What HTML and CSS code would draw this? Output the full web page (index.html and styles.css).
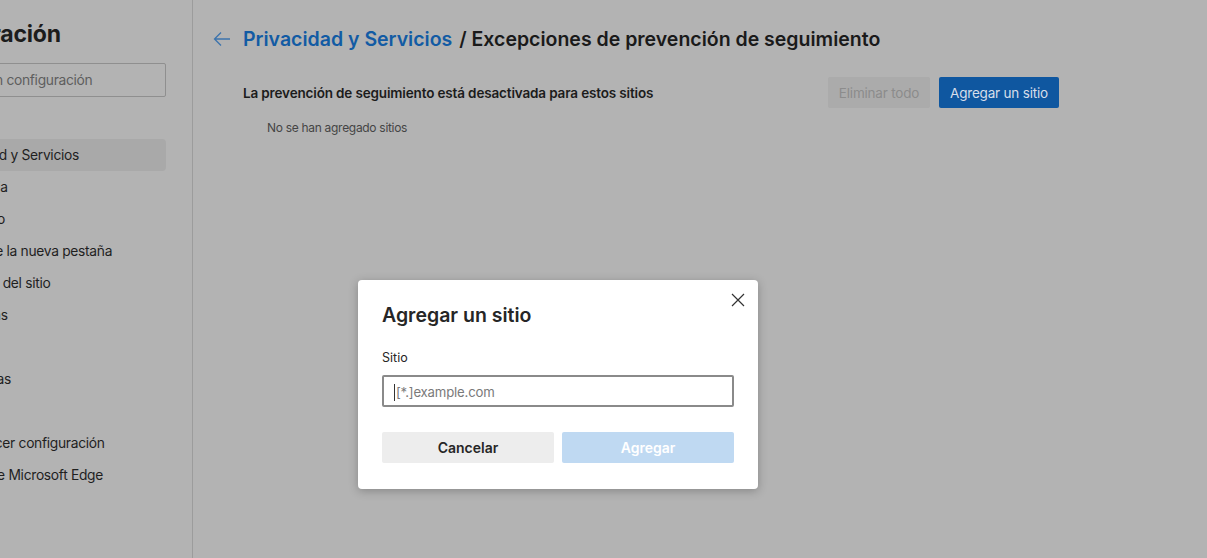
FILE: index.html
```html
<!DOCTYPE html>
<html lang="es">
<head>
<meta charset="utf-8">
<title>Configuración</title>
<link rel="stylesheet" href="styles.css">
</head>
<body>
<div class="app">
  <aside class="sidebar">
    <div class="side-inner">
      <h1 class="side-title">Configuración</h1>
      <div class="search">Buscar en configuración</div>
      <nav class="nav">
        <div class="nav-item">Perfiles</div>
        <div class="nav-item active">Privacidad y Servicios</div>
        <div class="nav-item">Apariencia</div>
        <div class="nav-item">Al iniciarlo</div>
        <div class="nav-item">Página de la nueva pestaña</div>
        <div class="nav-item">Permisos del sitio</div>
        <div class="nav-item">Descargas</div>
        <div class="nav-item">Idiomas</div>
        <div class="nav-item">Impresoras</div>
        <div class="nav-item">Sistema</div>
        <div class="nav-item">Restablecer configuración</div>
        <div class="nav-item">Acerca de Microsoft Edge</div>
      </nav>
    </div>
  </aside>
  <main class="main">
    <div class="heading">
      <svg class="back" width="18" height="16" viewBox="0 0 18 16"><path d="M17 8H2M8 1.5L1.5 8L8 14.5" fill="none" stroke="#3c74ad" stroke-width="1.3"/></svg>
      <span class="crumb">Privacidad y Servicios</span>
      <span class="crumb-rest">/ Excepciones de prevención de seguimiento</span>
    </div>
    <div class="section">
      <div class="section-row">
        <div class="section-title">La prevención de seguimiento está desactivada para estos sitios</div>
        <div class="actions">
          <button class="btn btn-disabled">Eliminar todo</button>
          <button class="btn btn-primary">Agregar un sitio</button>
        </div>
      </div>
      <div class="empty">No se han agregado sitios</div>
    </div>
  </main>
</div>
<div class="dialog">
  <svg class="close" width="14" height="14" viewBox="0 0 14 14"><path d="M1 1L13 13M13 1L1 13" stroke="#333" stroke-width="1.2" fill="none"/></svg>
  <h2 class="dialog-title">Agregar un sitio</h2>
  <label class="field-label">Sitio</label>
  <div class="input"><span class="caret"></span><span class="placeholder">[*.]example.com</span></div>
  <div class="dialog-actions">
    <button class="dbtn dbtn-cancel">Cancelar</button>
    <button class="dbtn dbtn-add">Agregar</button>
  </div>
</div>
</body>
</html>
```
FILE: styles.css
```css
* { box-sizing: border-box; }
html, body { margin: 0; padding: 0; }
body {
  background: #b3b3b3;
  font-family: Inter, "Noto Sans", "DejaVu Sans", sans-serif;
  color: #1c1c1c;
  width: 1207px;
  height: 558px;
  overflow: hidden;
  position: relative;
}
.app { display: flex; height: 558px; }
.sidebar {
  width: 193px;
  flex: none;
  border-right: 1px solid #9c9c9c;
  overflow: hidden;
}
.side-inner {
  width: 266px;
  margin-left: -100px;
  padding-top: 19px;
}
.side-title {
  margin: 0;
  padding-left: 3px;
  font-size: 23px;
  font-weight: 700;
  line-height: 30px;
  color: #1c1c1c;
  letter-spacing: -0.2px;
}
.search {
  margin-top: 14px;
  height: 34px;
  border: 1px solid #8f8f8f;
  border-radius: 2px;
  padding-left: 39px;
  display: flex;
  align-items: center;
  font-size: 13.8px;
  letter-spacing: -0.3px;
  color: #5e5e5e;
  white-space: nowrap;
}
.nav { margin-top: 10px; display: flex; flex-direction: column; }
.nav-item {
  height: 32px;
  display: flex;
  align-items: center;
  padding-left: 41px;
  font-size: 13.8px;
  letter-spacing: -0.3px;
  color: #1f1f1f;
  border-radius: 4px;
  white-space: nowrap;
}
.nav-item.active { background: #a9a9a9; }

.main { flex: 1; padding: 26px 0 0 20px; }
.heading { display: flex; align-items: center; height: 26px; }
.back { margin-right: 12px; }
.crumb { font-size: 19.5px; font-weight: 600; color: #125ba4; margin-right: 7px; }
.crumb-rest { font-size: 19.5px; font-weight: 600; color: #1a1a1a; }
.section { padding-left: 30px; margin-top: 25px; width: 846px; }
.section-row { display: flex; justify-content: space-between; align-items: center; height: 31px; }
.section-title { font-size: 13.5px; font-weight: 600; color: #1c1c1c; letter-spacing: -0.15px; }
.actions { display: flex; gap: 9px; }
.btn {
  height: 31px;
  border: none;
  border-radius: 2px;
  font-family: inherit;
  font-size: 13.5px;
  letter-spacing: -0.2px;
  padding: 0;
  white-space: nowrap;
}
.btn-disabled { background: #ababab; color: #8c8c8c; width: 102px; }
.btn-primary { background: #0f57a0; color: #d6deea; width: 120px; }
.empty { font-size: 12px; letter-spacing: -0.3px; color: #454545; padding-left: 24px; margin-top: 12px; }

.dialog {
  position: absolute;
  left: 358px;
  top: 280px;
  width: 400px;
  height: 209px;
  background: #fff;
  border-radius: 4px;
  box-shadow: 0 2px 10px rgba(0,0,0,0.25);
  padding: 22px 24px 0 24px;
}
.close { position: absolute; right: 13px; top: 13px; }
.dialog-title { margin: 0; font-size: 19.5px; font-weight: 600; line-height: 26px; color: #262626; }
.field-label { display: block; margin-top: 22px; font-size: 12.5px; color: #262626; line-height: 16px; }
.input {
  margin-top: 9px;
  height: 32px;
  border: 2px solid #8a8a8a;
  border-radius: 2px;
  display: flex;
  align-items: center;
  padding: 2px 0 0 10px;
}
.caret { width: 1px; height: 17px; background: #333; margin-right: 1px; }
.placeholder { font-size: 13.2px; letter-spacing: -0.2px; color: #7a7a7a; }
.dialog-actions { display: flex; gap: 8px; margin-top: 25px; }
.dbtn {
  flex: 1;
  height: 31px;
  border: none;
  border-radius: 2px;
  font-family: inherit;
  font-size: 14px;
  font-weight: 600;
}
.dbtn-cancel { background: #ededed; color: #262626; }
.dbtn-add { background: #bfd9f2; color: #fff; }
```
